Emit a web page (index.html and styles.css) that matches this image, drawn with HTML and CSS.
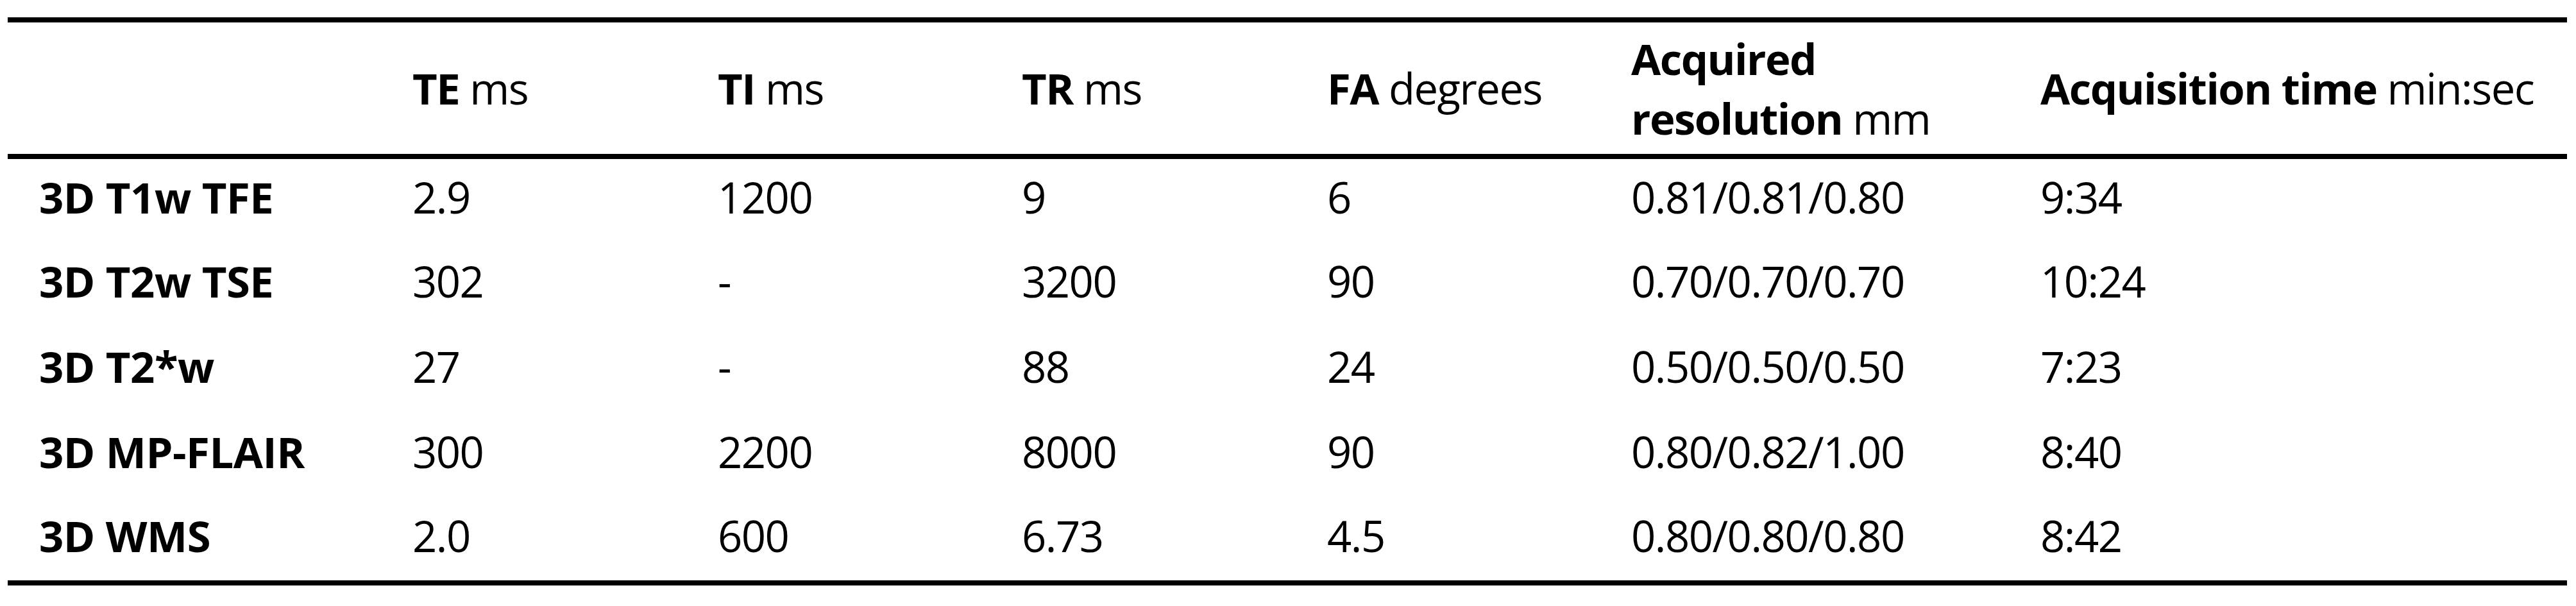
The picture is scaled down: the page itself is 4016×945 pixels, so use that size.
FILE: index.html
```html
<!DOCTYPE html>
<html lang="en">
<head>
<meta charset="UTF-8">
<title>MRI Sequence Parameters</title>
<link rel="stylesheet" href="styles.css">
</head>

<body>

<table class="params">
    <colgroup>
        <col class="c-name">
        <col class="c-te">
        <col class="c-ti">
        <col class="c-tr">
        <col class="c-fa">
        <col class="c-res">
        <col class="c-time">
    </colgroup>
    <thead>
        <tr>
            <th></th>
            <th><b>TE</b> ms</th>
            <th><b>TI</b> ms</th>
            <th><b>TR</b> ms</th>
            <th><b>FA</b> degrees</th>
            <th><b>Acquired<br>resolution</b> mm</th>
            <th><b>Acquisition time</b> min:sec</th>
        </tr>
    </thead>
    <tbody>
        <tr>
            <td class="name">3D T1w TFE</td>
            <td>2.9</td>
            <td>1200</td>
            <td>9</td>
            <td>6</td>
            <td>0.81/0.81/0.80</td>
            <td>9:34</td>
        </tr>
        <tr>
            <td class="name">3D T2w TSE</td>
            <td>302</td>
            <td>-</td>
            <td>3200</td>
            <td>90</td>
            <td>0.70/0.70/0.70</td>
            <td>10:24</td>
        </tr>
        <tr>
            <td class="name">3D T2*w</td>
            <td>27</td>
            <td>-</td>
            <td>88</td>
            <td>24</td>
            <td>0.50/0.50/0.50</td>
            <td>7:23</td>
        </tr>
        <tr>
            <td class="name">3D MP-FLAIR</td>
            <td>300</td>
            <td>2200</td>
            <td>8000</td>
            <td>90</td>
            <td>0.80/0.82/1.00</td>
            <td>8:40</td>
        </tr>
        <tr>
            <td class="name">3D WMS</td>
            <td>2.0</td>
            <td>600</td>
            <td>6.73</td>
            <td>4.5</td>
            <td>0.80/0.80/0.80</td>
            <td>8:42</td>
        </tr>
    </tbody>
</table>

</body>
</html>
```

FILE: styles.css
```css
body {
    margin: 27px 0 0 12px;
    background: white;
    color: #000;
    font-family: "Open Sans", "Noto Sans", sans-serif;
    font-size: 67px;
    letter-spacing: -1.5px;
}

/* TABLE */
.params {
    width: 3990px;
    border-collapse: collapse;
    table-layout: fixed;
    border-top: 8px solid #000;
    border-bottom: 8px solid #000;
}

.c-name { width: 631px; }
.c-te   { width: 476px; }
.c-ti   { width: 474px; }
.c-tr   { width: 476px; }
.c-fa   { width: 474px; }
.c-res  { width: 638px; }
.c-time { width: 821px; }

.params th,
.params td {
    padding: 0;
    text-align: left;
    vertical-align: middle;
    white-space: nowrap;
}

.params th {
    font-weight: normal;
    height: 205px;
    line-height: 93px;
    border-bottom: 8px solid #000;
}

.params th b {
    font-weight: bold;
    letter-spacing: -1.5px;
}

.params td {
    height: 133px;
    line-height: 93px;
    padding-bottom: 10px;
    box-sizing: border-box;
}

.params td.name {
    padding-left: 49px;
    font-weight: bold;
    letter-spacing: -0.5px;
}
```
